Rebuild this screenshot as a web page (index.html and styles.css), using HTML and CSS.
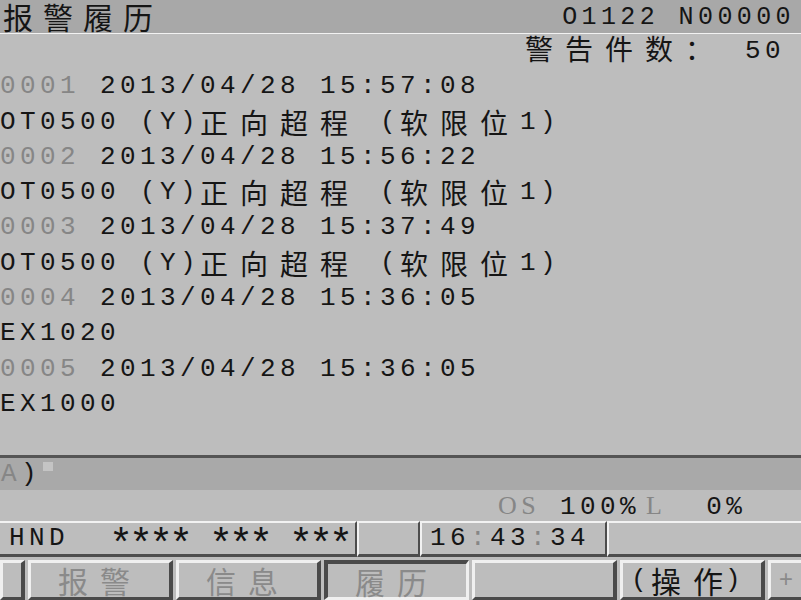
FILE: index.html
```html
<!DOCTYPE html>
<html lang="zh">
<head>
    <meta charset="UTF-8">
    <title>报警履历</title>
    <link rel="stylesheet" href="styles.css">
</head>
<body>
    <div class="screen">
        <div class="top">
            <span class="c title">报警履历</span>
            <span class="prog">O1122 N00000</span>
        </div>

        <div class="list">
            <div class="row count"><span class="c">警告件数：</span> 50</div>
            <div class="row"><span class="dim">0001</span> 2013/04/28 15:57:08</div>
            <div class="row">OT0500 (Y)<span class="c">正向超程</span> (<span class="c">软限位</span>1)</div>
            <div class="row"><span class="dim">0002</span> 2013/04/28 15:56:22</div>
            <div class="row">OT0500 (Y)<span class="c">正向超程</span> (<span class="c">软限位</span>1)</div>
            <div class="row"><span class="dim">0003</span> 2013/04/28 15:37:49</div>
            <div class="row">OT0500 (Y)<span class="c">正向超程</span> (<span class="c">软限位</span>1)</div>
            <div class="row"><span class="dim">0004</span> 2013/04/28 15:36:05</div>
            <div class="row">EX1020</div>
            <div class="row"><span class="dim">0005</span> 2013/04/28 15:36:05</div>
            <div class="row">EX1000</div>
        </div>

        <div class="input"><span class="dim">A</span>)<span class="cursor"></span></div>

        <div class="state"><span class="dim serif">OS</span> 100%<span class="dim serif lim">L</span>  0%</div>

        <div class="status">
            <div class="cell mode">HND  <span class="star">****</span> <span class="star">***</span> <span class="star">***</span></div>
            <div class="cell blank"></div>
            <div class="cell clock">16<span class="dim">:</span>43<span class="dim">:</span>34</div>
            <div class="cell rest"></div>
        </div>

        <div class="keys">
            <div class="key narrow"></div>
            <div class="key"><span class="c">报警</span></div>
            <div class="key"><span class="c">信息</span></div>
            <div class="key active"><span class="c">履历</span></div>
            <div class="key"></div>
            <div class="key dark">(<span class="c">操作</span>)</div>
            <div class="key more">+</div>
        </div>
    </div>
</body>
</html>
```

FILE: styles.css
```css
body {
    margin: 0;
    background-color: #bdbdbd;
}

.screen {
    width: 801px;
    height: 600px;
    display: flex;
    flex-direction: column;
    overflow: hidden;
    background-color: #bdbdbd;
    color: #151515;
    font-family: "Liberation Mono", monospace;
    font-size: 26px;
    letter-spacing: 4.4px;
}

.row, .input, .state, .cell, .prog {
    white-space: pre;
}

.c {
    font-family: "Noto Sans CJK SC", sans-serif;
    font-size: 28px;
    letter-spacing: 12px;
    line-height: 0;
    vertical-align: -5px;
}

.dim {
    color: #868686;
}

.serif {
    font-family: "Liberation Serif", serif;
}

/* title bar */
.top {
    height: 33px;
    border-bottom: 1px solid #f2f2f2;
    background-color: #a8a8a8;
    display: flex;
    justify-content: space-between;
    align-items: center;
}

.top .title {
    padding-left: 3px;
    font-size: 30px;
    letter-spacing: 10px;
    vertical-align: 0;
    line-height: 33px;
}

.top .prog {
    font-size: 25px;
    padding-top: 2px;
    padding-right: 6px;
}

/* alarm list */
.list {
    flex: 1;
}

.row {
    height: 35.3px;
    line-height: 35.3px;
}

.row.count {
    text-align: right;
    padding-right: 16px;
}

.row.count .c {
    vertical-align: -2px;
}

/* key-in line */
.input {
    height: 32px;
    line-height: 32px;
    border-top: 3px solid #555;
    background-color: #a9a9a9;
    padding-left: 1px;
}

.cursor {
    display: inline-block;
    width: 10px;
    height: 9px;
    margin-left: 2px;
    background-color: #c4c4c4;
    vertical-align: 10px;
}

.state {
    height: 31px;
    line-height: 31px;
    padding-left: 498px;
}

.lim {
    margin-left: 6px;
}

/* status bar */
.status {
    height: 36px;
    display: flex;
}

.cell {
    box-sizing: border-box;
    height: 36px;
    line-height: 31px;
    border-top: 2px solid #f2f2f2;
    border-left: 2px solid #f2f2f2;
    border-right: 2px solid #4d4d4d;
    border-bottom: 3px solid #4d4d4d;
}

.cell.mode {
    width: 357px;
    border-left: none;
    padding-left: 9px;
}

.cell.blank {
    width: 63px;
}

.cell.clock {
    width: 187px;
    padding-left: 8px;
}

.cell.rest {
    flex: 1;
    border-right: none;
}

.star {
    font-size: 40px;
    letter-spacing: -4px;
    line-height: 0;
    vertical-align: -12px;
}

/* soft keys */
.keys {
    display: flex;
    gap: 3px;
    padding-top: 3px;
    height: 40px;
}

.key {
    box-sizing: border-box;
    width: 145px;
    height: 40px;
    border-top: 3px solid #f0f0f0;
    border-left: 3px solid #f0f0f0;
    border-right: 4px solid #4a4a4a;
    border-bottom: 3px solid #4a4a4a;
    display: flex;
    justify-content: center;
    align-items: center;
    color: #8a8a8a;
}

.key .c {
    font-size: 30px;
    letter-spacing: 12px;
    vertical-align: 0;
    line-height: 34px;
}

.key.narrow {
    width: 25px;
}

.key.active {
    border-top: 4px solid #4a4a4a;
    border-left: 4px solid #4a4a4a;
    border-right: 3px solid #f0f0f0;
    border-bottom: 3px solid #f0f0f0;
}

.key.dark {
    color: #151515;
    padding-right: 8px;
}

.key.dark .c {
    margin-right: -10px;
}

.key.more {
    flex: 1;
    width: auto;
    border-right: none;
    font-size: 24px;
    letter-spacing: 0;
}
```
